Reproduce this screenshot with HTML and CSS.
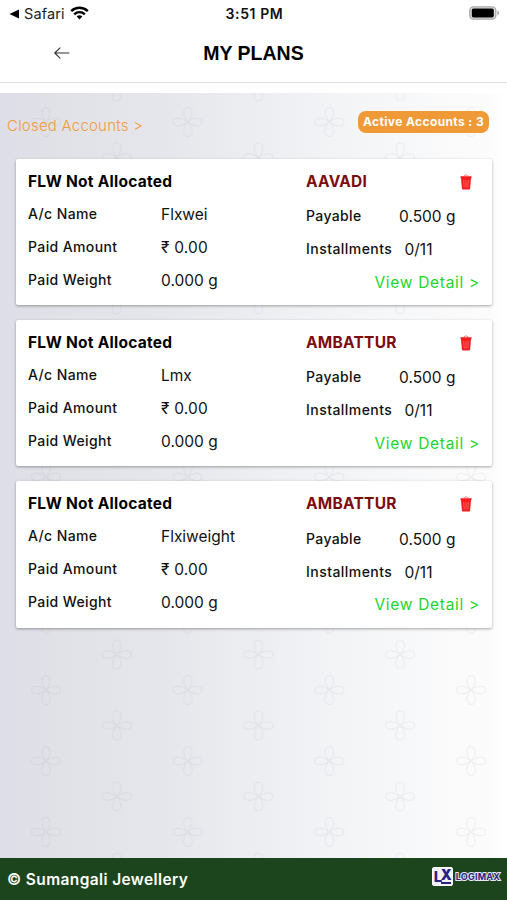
FILE: index.html
```
<!DOCTYPE html>
<html lang="en">
<head>
<meta charset="utf-8">
<title>My Plans</title>
<link rel="stylesheet" href="styles.css">
</head>
<body>
<div class="status">
  <div class="status-left">
    <svg width="11" height="10" viewBox="0 0 11 10"><path d="M.5 5 10 .5v9z"/></svg>
    <span class="safari">Safari</span>
    <svg class="wifi" width="19" height="14" viewBox="0 0 19 14"><g fill="none" stroke="#000" stroke-width="2.4"><path d="M1.2 5.2a11.8 11.8 0 0 1 16.6 0"/><path d="M4.2 8.3a7.6 7.6 0 0 1 10.6 0"/></g><path d="M9.5 13.4 6.7 10.6a4 4 0 0 1 5.6 0z"/></svg>
  </div>
  <div class="time">3:51 PM</div>
  <svg class="battery" width="31" height="14" viewBox="0 0 31 14"><rect x=".8" y=".8" width="26" height="12.4" rx="3.6" fill="#ddd" stroke="#aaa" stroke-width="1.3"/><rect x="2.8" y="2.6" width="22" height="8.8" rx="1.6"/><path d="M28.3 4.6q2 1 2 2.4t-2 2.4z" fill="#aaa"/></svg>
</div>
<header class="header">
  <svg class="back" width="16" height="14" viewBox="0 0 16 14" fill="none" stroke="#333" stroke-width="1.1" stroke-linecap="round" stroke-linejoin="round"><path d="M15 7H1M6 1.8.8 7 6 12.2"/></svg>
  <h1>MY PLANS</h1>
</header>
<main class="content">
  <svg class="pattern" width="507" height="765">
    <defs>
      <g id="flower" fill="none" stroke="#70748a" stroke-opacity=".09" stroke-width="1">
        <path d="M0 0C-7-8-4-14.500 0-14.500S7-8 0 0C-7 8-4 14.500 0 14.500S7 8 0 0C-8-6-14.500-4-14.500 0S-8 6 0 0C8-6 14.500-4 14.500 0S8 6 0 0"/>
      </g>
      <pattern id="tile" width="141.700" height="71" patternUnits="userSpaceOnUse">
        <use href="#flower" x="46" y="29"/>
        <use href="#flower" x="116.700" y="64.500"/>
        <use href="#flower" x="116.700" y="-6.500"/>
      </pattern>
    </defs>
    <rect width="507" height="765" fill="url(#tile)"/>
  </svg>
  <div class="toolbar"><a class="closed">Closed Accounts &gt;</a><span class="badge">Active Accounts : 3</span></div>
  <section class="cards">
    <article class="card">
      <div class="left"><h2>FLW Not Allocated</h2>
        <div class="row"><b>A/c Name</b><span>Flxwei</span></div>
        <div class="row"><b>Paid Amount</b><span>₹ 0.00</span></div>
        <div class="row"><b>Paid Weight</b><span>0.000 g</span></div></div>
      <div class="right"><div class="top"><h3>AAVADI</h3><svg class="trash" width="12" height="16" viewBox="0 0 12 16"><path d="M3.500 2.200Q6-.8 8.500 2.200" fill="none" stroke="#ff8080"/><path d="M.5 2.300h11v2H.5zM1 4.300h10l-.9 10.200q-.1 1-1 1H2.900q-.9 0-1-1z" fill="#f51d1d"/><path d="m3.700 6 .5 7.500M6 6v7.500M8.300 6l-.5 7.500" stroke="#ff7777" stroke-width=".7"/></svg></div>
        <div class="row pay"><b>Payable</b><span>0.500 g</span></div>
        <div class="row inst"><b>Installments</b><span>0/11</span></div>
        <a class="detail">View Detail &gt;</a></div>
    </article>
    <article class="card">
      <div class="left"><h2>FLW Not Allocated</h2>
        <div class="row"><b>A/c Name</b><span>Lmx</span></div>
        <div class="row"><b>Paid Amount</b><span>₹ 0.00</span></div>
        <div class="row"><b>Paid Weight</b><span>0.000 g</span></div></div>
      <div class="right"><div class="top"><h3>AMBATTUR</h3><svg class="trash" width="12" height="16" viewBox="0 0 12 16"><path d="M3.500 2.200Q6-.8 8.500 2.200" fill="none" stroke="#ff8080"/><path d="M.5 2.300h11v2H.5zM1 4.300h10l-.9 10.200q-.1 1-1 1H2.900q-.9 0-1-1z" fill="#f51d1d"/><path d="m3.700 6 .5 7.500M6 6v7.500M8.300 6l-.5 7.500" stroke="#ff7777" stroke-width=".7"/></svg></div>
        <div class="row pay"><b>Payable</b><span>0.500 g</span></div>
        <div class="row inst"><b>Installments</b><span>0/11</span></div>
        <a class="detail">View Detail &gt;</a></div>
    </article>
    <article class="card">
      <div class="left"><h2>FLW Not Allocated</h2>
        <div class="row"><b>A/c Name</b><span>Flxiweight</span></div>
        <div class="row"><b>Paid Amount</b><span>₹ 0.00</span></div>
        <div class="row"><b>Paid Weight</b><span>0.000 g</span></div></div>
      <div class="right"><div class="top"><h3>AMBATTUR</h3><svg class="trash" width="12" height="16" viewBox="0 0 12 16"><path d="M3.500 2.200Q6-.8 8.500 2.200" fill="none" stroke="#ff8080"/><path d="M.5 2.300h11v2H.5zM1 4.300h10l-.9 10.200q-.1 1-1 1H2.900q-.9 0-1-1z" fill="#f51d1d"/><path d="m3.700 6 .5 7.500M6 6v7.500M8.300 6l-.5 7.500" stroke="#ff7777" stroke-width=".7"/></svg></div>
        <div class="row pay"><b>Payable</b><span>0.500 g</span></div>
        <div class="row inst"><b>Installments</b><span>0/11</span></div>
        <a class="detail">View Detail &gt;</a></div>
    </article>
  </section>
</main>
<footer class="footer">
  <span>© Sumangali Jewellery</span>
  <div class="logo"><span class="lx"><b>L</b><i>X</i></span><span class="logimax">LOGIMAX</span></div>
</footer>
</body>
</html>
```
FILE: styles.css
```
* { box-sizing: border-box; }
body { margin: 0; width: 507px; height: 900px; overflow: hidden; display: flex; flex-direction: column; background: #fff; color: #111; font-family: Inter, "Liberation Sans", sans-serif; }
h1, h2, h3 { margin: 0; }
.status { height: 27px; display: grid; grid-template-columns: 1fr 80px 1fr; align-items: center; padding: 0 7px 0 9px; }
.status-left { display: flex; align-items: center; gap: 4px; }
.safari { font-size: 14.500px; letter-spacing: .1px; color: #222; }
.wifi { margin-top: -2px; margin-left: 1px; }
.time { font-size: 14px; font-weight: 600; text-align: center; white-space: nowrap; letter-spacing: .6px; }
.battery { justify-self: end; margin-top: -1px; }
.header { height: 56px; border-bottom: 1px solid #dedede; display: grid; grid-template-columns: 100px 1fr 100px; align-items: center; padding-bottom: 3px; }
.back { margin-left: 54px; margin-top: 0; }
.header h1 { font-family: "Liberation Sans", sans-serif; font-size: 19.500px; text-align: center; color: #000; }
.content { position: relative; margin-top: 10px; height: 765px; background: linear-gradient(90deg, #dddee8 0, #e0e1e7 45px, #e6e7ec 170px, #edeef1 260px, #f5f6f8 370px, #fcfcfc 490px, #fff 507px); }
.pattern { position: absolute; inset: 0; }
.toolbar { position: relative; height: 65.500px; display: flex; justify-content: space-between; align-items: flex-start; padding: 18px 18px 0 7px; }
.closed { font-size: 15px; font-weight: 300; color: #f19a38; margin-top: 5.500px; line-height: 18px; letter-spacing: .22px; }
.badge { height: 22px; width: 131px; border-radius: 8px; background: #ef9a36; color: #fff; font-size: 12px; font-weight: 700; line-height: 21.500px; text-align: center; letter-spacing: .38px; white-space: nowrap; }
.cards { position: relative; display: flex; flex-direction: column; gap: 15px; padding: 0 15px 0 15.500px; }
.card { height: 146.400px; background: #fff; border-radius: 2px; box-shadow: 0 1px 3px rgba(0,0,0,.35); display: grid; grid-template-columns: 278px 1fr; padding: 13px 12px 0 12.500px; white-space: nowrap; }
.card h2, .card h3 { font-size: 15.500px; line-height: 20px; font-weight: 700; letter-spacing: .25px; }
.card h2 { color: #000; margin-bottom: 6px; }
.card h3 { color: #7c0c10; }
.row { display: grid; grid-template-columns: 133px 1fr; height: 33px; align-items: center; }
.row b { font-size: 14px; font-weight: 500; letter-spacing: .38px; }
.left .row b { margin-top: -2px; }
.row span { font-size: 15.500px; }
.right .row b { margin-top: -1px; }
.right .row span { padding-top: 1px; }
.left .row:nth-child(3) span { letter-spacing: .2px; }
.top { display: flex; justify-content: space-between; align-items: center; height: 20px; margin-bottom: 8px; }
.trash { margin-right: 8px; }
.pay { grid-template-columns: 93px 1fr; }
.inst { grid-template-columns: 98.500px 1fr; }
.inst b { letter-spacing: .45px; }
.detail { display: block; text-align: right; font-size: 15.500px; letter-spacing: .7px; line-height: 33.500px; color: #23d52b; }
.footer { height: 42px; background: #1d451d; color: #fff; display: flex; justify-content: space-between; align-items: center; padding: 0 7px; font-size: 15.500px; font-weight: 600; letter-spacing: .38px; }
.logo { display: flex; align-items: center; gap: 3px; margin-top: -5px; }
.lx { display: flex; justify-content: center; align-items: center; width: 21px; height: 19px; border-radius: 2px; border: 1px solid #fff; background: #f4f2fa; color: #2a2480; line-height: 15px; letter-spacing: 0; }
.lx b { width: 7px; height: 15px; font-size: 15px; font-weight: 800; line-height: 16px; }
.lx i { width: 10px; height: 15px; border-bottom: 2px solid #2a2480; font-size: 14px; font-style: normal; font-weight: 900; line-height: 12px; }
.logimax { font-size: 9px; font-weight: 700; letter-spacing: .2px; color: #2a2480; -webkit-text-stroke: 2px #e8e8f2; paint-order: stroke fill; }
```
